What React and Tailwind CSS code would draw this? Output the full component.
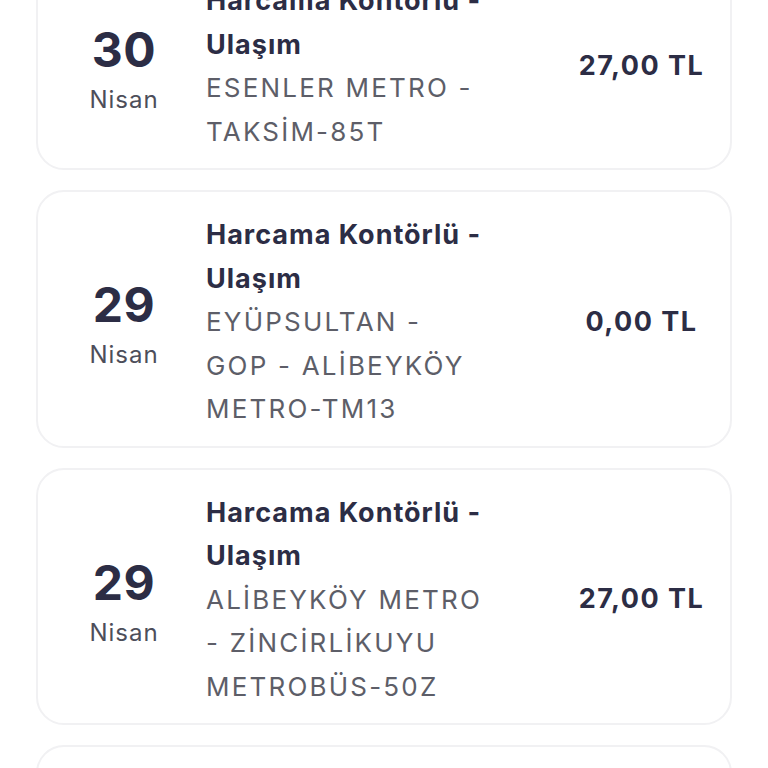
const ITEMS = [
  {
    day: "30",
    month: "Nisan",
    title: ["Harcama Kontörlü -", "Ulaşım"],
    route: ["ESENLER METRO -", "TAKSİM-85T"],
    amount: "27,00 TL"
  },
  {
    day: "29",
    month: "Nisan",
    title: ["Harcama Kontörlü -", "Ulaşım"],
    route: ["EYÜPSULTAN -", "GOP - ALİBEYKÖY", "METRO-TM13"],
    amount: "0,00 TL"
  },
  {
    day: "29",
    month: "Nisan",
    title: ["Harcama Kontörlü -", "Ulaşım"],
    route: ["ALİBEYKÖY METRO", "- ZİNCİRLİKUYU", "METROBÜS-50Z"],
    amount: "27,00 TL"
  },
  {
    day: "28",
    month: "Nisan",
    title: ["Harcama Kontörlü -", "Ulaşım"],
    route: ["ALİBEYKÖY METRO", "- ZİNCİRLİKUYU"],
    amount: "27,00 TL"
  }
]

const font = { fontFamily: "Inter, 'Noto Sans', sans-serif" }

const App = () => {
  return (
    <div className="h-screen bg-white overflow-hidden" style={font}>
      <div className="-mt-[44px] px-[36px] flex flex-col gap-[20px]">
        {ITEMS.map((item, index) => (
          <div
            key={index}
            className="border-2 border-[#f1f1f3] rounded-[28px] bg-white flex items-center pt-[21px] pb-[15px] pl-[4px]"
          >
            <div className="w-[164px] flex flex-col items-center pt-[6px]">
              <span className="text-[48px] leading-[52px] font-bold text-[#2c2d45] tracking-[0.5px]">
                {item.day}
              </span>
              <span className="mt-[9px] text-[24px] leading-[30px] text-[#4d4e5a] tracking-[1px]">
                {item.month}
              </span>
            </div>
            <div className="flex-1 leading-[43.5px]">
              {item.title.map((line, i) => (
                <div key={i} className="text-[27px] font-bold text-[#2c2d45] tracking-[1px]">
                  {line}
                </div>
              ))}
              {item.route.map((line, i) => (
                <div key={i} className="text-[26px] text-[#5d5e68] tracking-[2.2px]">
                  {line}
                </div>
              ))}
            </div>
            <div className="w-[175px] text-center text-[27px] font-bold text-[#2c2d45] tracking-[1.5px] pr-[2px]">
              {item.amount}
            </div>
          </div>
        ))}
      </div>
    </div>
  )
}

export default App
